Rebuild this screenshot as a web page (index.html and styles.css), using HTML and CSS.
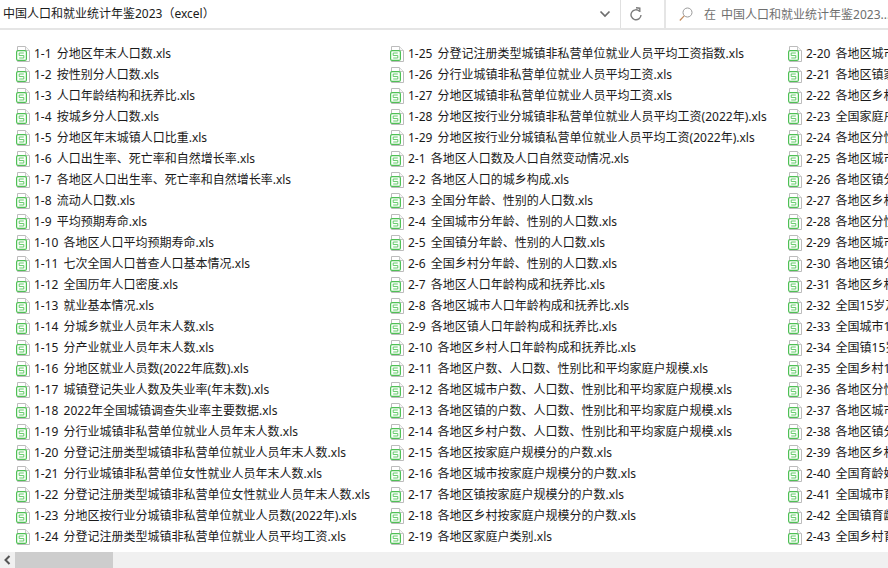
FILE: index.html
```html
<!DOCTYPE html>
<html lang="zh-CN">
<head>
<meta charset="utf-8">
<title>中国人口和就业统计年鉴2023（excel）</title>
<link rel="stylesheet" href="styles.css">
</head>
<body>
<svg class="defs" width="0" height="0" aria-hidden="true">
<symbol id="xls" viewBox="0 0 14 16">
<path d="M1.500 .5H9.500L13.500 4.500V15.500H1.500Z" fill="#fff" stroke="#bcbcbc"/>
<path d="M9.500 .5V4.500H13.500" fill="#f6f6f6" stroke="#c8c8c8"/>
<rect x=".6" y="4.600" width="9.800" height="9.800" rx="1.500" fill="#fafffa" stroke="#4fc055" stroke-width="1.200"/>
<path d="M7.800 7H3.200V9.500H7.800V12H3.200" fill="none" stroke="#5cc662" stroke-width=".9"/>
</symbol>
</svg>
<header class="bar">
<div class="title">中国人口和就业统计年鉴2023（excel）</div>
<div class="tool tool-chevron"><svg width="12" height="8" viewBox="0 0 12 8"><path d="M1.500 1.500L6 6L10.500 1.500" fill="none" stroke="#6d6d6d" stroke-width="1.700"/></svg></div>
<div class="tool"><svg width="12" height="14" viewBox="0 0 12 14"><path d="M9.500 4.200A5 5 0 1 0 11 8" fill="none" stroke="#7b7b7b" stroke-width="1.400"/><path d="M6 .8L9.800 1.200V5" fill="none" stroke="#7b7b7b" stroke-width="1.400"/></svg></div>
<div class="search">
<svg class="search-icon" width="14" height="15" viewBox="0 0 14 15"><circle cx="8.500" cy="5.500" r="4.500" fill="none" stroke="#9a9a9a"/><path d="M5.200 8.800L.8 13.500" stroke="#c28a5c" stroke-width="1.200"/></svg>
<span class="placeholder">在 中国人口和就业统计年鉴2023...</span>
</div>
</header>
<main class="list">
<section class="col col-a">
<div class="row"><svg class="ico"><use href="#xls"/></svg><span>1-1 分地区年末人口数.xls</span></div>
<div class="row"><svg class="ico"><use href="#xls"/></svg><span>1-2 按性别分人口数.xls</span></div>
<div class="row"><svg class="ico"><use href="#xls"/></svg><span>1-3 人口年龄结构和抚养比.xls</span></div>
<div class="row"><svg class="ico"><use href="#xls"/></svg><span>1-4 按城乡分人口数.xls</span></div>
<div class="row"><svg class="ico"><use href="#xls"/></svg><span>1-5 分地区年末城镇人口比重.xls</span></div>
<div class="row"><svg class="ico"><use href="#xls"/></svg><span>1-6 人口出生率、死亡率和自然增长率.xls</span></div>
<div class="row"><svg class="ico"><use href="#xls"/></svg><span>1-7 各地区人口出生率、死亡率和自然增长率.xls</span></div>
<div class="row"><svg class="ico"><use href="#xls"/></svg><span>1-8 流动人口数.xls</span></div>
<div class="row"><svg class="ico"><use href="#xls"/></svg><span>1-9 平均预期寿命.xls</span></div>
<div class="row"><svg class="ico"><use href="#xls"/></svg><span>1-10 各地区人口平均预期寿命.xls</span></div>
<div class="row"><svg class="ico"><use href="#xls"/></svg><span>1-11 七次全国人口普查人口基本情况.xls</span></div>
<div class="row"><svg class="ico"><use href="#xls"/></svg><span>1-12 全国历年人口密度.xls</span></div>
<div class="row"><svg class="ico"><use href="#xls"/></svg><span>1-13 就业基本情况.xls</span></div>
<div class="row"><svg class="ico"><use href="#xls"/></svg><span>1-14 分城乡就业人员年末人数.xls</span></div>
<div class="row"><svg class="ico"><use href="#xls"/></svg><span>1-15 分产业就业人员年末人数.xls</span></div>
<div class="row"><svg class="ico"><use href="#xls"/></svg><span>1-16 分地区就业人员数(2022年底数).xls</span></div>
<div class="row"><svg class="ico"><use href="#xls"/></svg><span>1-17 城镇登记失业人数及失业率(年末数).xls</span></div>
<div class="row"><svg class="ico"><use href="#xls"/></svg><span>1-18 2022年全国城镇调查失业率主要数据.xls</span></div>
<div class="row"><svg class="ico"><use href="#xls"/></svg><span>1-19 分行业城镇非私营单位就业人员年末人数.xls</span></div>
<div class="row"><svg class="ico"><use href="#xls"/></svg><span>1-20 分登记注册类型城镇非私营单位就业人员年末人数.xls</span></div>
<div class="row"><svg class="ico"><use href="#xls"/></svg><span>1-21 分行业城镇非私营单位女性就业人员年末人数.xls</span></div>
<div class="row"><svg class="ico"><use href="#xls"/></svg><span>1-22 分登记注册类型城镇非私营单位女性就业人员年末人数.xls</span></div>
<div class="row"><svg class="ico"><use href="#xls"/></svg><span>1-23 分地区按行业分城镇非私营单位就业人员数(2022年).xls</span></div>
<div class="row"><svg class="ico"><use href="#xls"/></svg><span>1-24 分登记注册类型城镇非私营单位就业人员平均工资.xls</span></div>
</section>
<section class="col col-b">
<div class="row"><svg class="ico"><use href="#xls"/></svg><span>1-25 分登记注册类型城镇非私营单位就业人员平均工资指数.xls</span></div>
<div class="row"><svg class="ico"><use href="#xls"/></svg><span>1-26 分行业城镇非私营单位就业人员平均工资.xls</span></div>
<div class="row"><svg class="ico"><use href="#xls"/></svg><span>1-27 分地区城镇非私营单位就业人员平均工资.xls</span></div>
<div class="row"><svg class="ico"><use href="#xls"/></svg><span>1-28 分地区按行业分城镇非私营单位就业人员平均工资(2022年).xls</span></div>
<div class="row"><svg class="ico"><use href="#xls"/></svg><span>1-29 分地区按行业分城镇私营单位就业人员平均工资(2022年).xls</span></div>
<div class="row"><svg class="ico"><use href="#xls"/></svg><span>2-1 各地区人口数及人口自然变动情况.xls</span></div>
<div class="row"><svg class="ico"><use href="#xls"/></svg><span>2-2 各地区人口的城乡构成.xls</span></div>
<div class="row"><svg class="ico"><use href="#xls"/></svg><span>2-3 全国分年龄、性别的人口数.xls</span></div>
<div class="row"><svg class="ico"><use href="#xls"/></svg><span>2-4 全国城市分年龄、性别的人口数.xls</span></div>
<div class="row"><svg class="ico"><use href="#xls"/></svg><span>2-5 全国镇分年龄、性别的人口数.xls</span></div>
<div class="row"><svg class="ico"><use href="#xls"/></svg><span>2-6 全国乡村分年龄、性别的人口数.xls</span></div>
<div class="row"><svg class="ico"><use href="#xls"/></svg><span>2-7 各地区人口年龄构成和抚养比.xls</span></div>
<div class="row"><svg class="ico"><use href="#xls"/></svg><span>2-8 各地区城市人口年龄构成和抚养比.xls</span></div>
<div class="row"><svg class="ico"><use href="#xls"/></svg><span>2-9 各地区镇人口年龄构成和抚养比.xls</span></div>
<div class="row"><svg class="ico"><use href="#xls"/></svg><span>2-10 各地区乡村人口年龄构成和抚养比.xls</span></div>
<div class="row"><svg class="ico"><use href="#xls"/></svg><span>2-11 各地区户数、人口数、性别比和平均家庭户规模.xls</span></div>
<div class="row"><svg class="ico"><use href="#xls"/></svg><span>2-12 各地区城市户数、人口数、性别比和平均家庭户规模.xls</span></div>
<div class="row"><svg class="ico"><use href="#xls"/></svg><span>2-13 各地区镇的户数、人口数、性别比和平均家庭户规模.xls</span></div>
<div class="row"><svg class="ico"><use href="#xls"/></svg><span>2-14 各地区乡村户数、人口数、性别比和平均家庭户规模.xls</span></div>
<div class="row"><svg class="ico"><use href="#xls"/></svg><span>2-15 各地区按家庭户规模分的户数.xls</span></div>
<div class="row"><svg class="ico"><use href="#xls"/></svg><span>2-16 各地区城市按家庭户规模分的户数.xls</span></div>
<div class="row"><svg class="ico"><use href="#xls"/></svg><span>2-17 各地区镇按家庭户规模分的户数.xls</span></div>
<div class="row"><svg class="ico"><use href="#xls"/></svg><span>2-18 各地区乡村按家庭户规模分的户数.xls</span></div>
<div class="row"><svg class="ico"><use href="#xls"/></svg><span>2-19 各地区家庭户类别.xls</span></div>
</section>
<section class="col col-c">
<div class="row"><svg class="ico"><use href="#xls"/></svg><span>2-20 各地区城市</span></div>
<div class="row"><svg class="ico"><use href="#xls"/></svg><span>2-21 各地区镇家</span></div>
<div class="row"><svg class="ico"><use href="#xls"/></svg><span>2-22 各地区乡村</span></div>
<div class="row"><svg class="ico"><use href="#xls"/></svg><span>2-23 全国家庭户</span></div>
<div class="row"><svg class="ico"><use href="#xls"/></svg><span>2-24 各地区分性</span></div>
<div class="row"><svg class="ico"><use href="#xls"/></svg><span>2-25 各地区城市</span></div>
<div class="row"><svg class="ico"><use href="#xls"/></svg><span>2-26 各地区镇分</span></div>
<div class="row"><svg class="ico"><use href="#xls"/></svg><span>2-27 各地区乡村</span></div>
<div class="row"><svg class="ico"><use href="#xls"/></svg><span>2-28 各地区分性</span></div>
<div class="row"><svg class="ico"><use href="#xls"/></svg><span>2-29 各地区城市</span></div>
<div class="row"><svg class="ico"><use href="#xls"/></svg><span>2-30 各地区镇分</span></div>
<div class="row"><svg class="ico"><use href="#xls"/></svg><span>2-31 各地区乡村</span></div>
<div class="row"><svg class="ico"><use href="#xls"/></svg><span>2-32 全国15岁及</span></div>
<div class="row"><svg class="ico"><use href="#xls"/></svg><span>2-33 全国城市15</span></div>
<div class="row"><svg class="ico"><use href="#xls"/></svg><span>2-34 全国镇15岁</span></div>
<div class="row"><svg class="ico"><use href="#xls"/></svg><span>2-35 全国乡村15</span></div>
<div class="row"><svg class="ico"><use href="#xls"/></svg><span>2-36 各地区分性</span></div>
<div class="row"><svg class="ico"><use href="#xls"/></svg><span>2-37 各地区城市</span></div>
<div class="row"><svg class="ico"><use href="#xls"/></svg><span>2-38 各地区镇分</span></div>
<div class="row"><svg class="ico"><use href="#xls"/></svg><span>2-39 各地区乡村</span></div>
<div class="row"><svg class="ico"><use href="#xls"/></svg><span>2-40 全国育龄妇</span></div>
<div class="row"><svg class="ico"><use href="#xls"/></svg><span>2-41 全国城市育</span></div>
<div class="row"><svg class="ico"><use href="#xls"/></svg><span>2-42 全国镇育龄</span></div>
<div class="row"><svg class="ico"><use href="#xls"/></svg><span>2-43 全国乡村育</span></div>
</section>
</main>
<footer class="scrollbar">
<div class="arrow"><svg width="7" height="10" viewBox="0 0 7 10"><path d="M5.500 1L1.500 5L5.500 9" fill="none" stroke="#555" stroke-width="2"/></svg></div>
<div class="thumb"></div>
</footer>
</body>
</html>
```
FILE: styles.css
```css
* { box-sizing: border-box; }
html, body { height: 100%; }
body {
  margin: 0;
  width: 888px;
  height: 568px;
  overflow: hidden;
  display: flex;
  flex-direction: column;
  background: #fff;
  color: #1a1a1a;
  font: 12px/21px "Noto Sans", "Noto Sans CJK SC", sans-serif;
  word-spacing: 2px;
}
.defs { display: block; height: 0; }
.bar {
  flex: none;
  height: 30px;
  display: flex;
  border-bottom: 2px solid #e5e5e5;
}
.title {
  width: 589px;
  padding-left: 3px;
  line-height: 27px;
  white-space: nowrap;
}
.tool {
  width: 31px;
  display: flex;
  align-items: center;
  justify-content: center;
  border-left: 1px solid #e0e0e0;
}
.tool-chevron { border-left: 0; }
.search {
  flex: 1;
  margin-left: 13px;
  display: flex;
  align-items: center;
  padding-left: 13px;
  gap: 11px;
  border-left: 2px solid #e5e5e5;
  white-space: nowrap;
  overflow: hidden;
}
.search-icon { flex: none; }
.placeholder { color: #6f6f6f; }
.list {
  flex: 1;
  min-height: 0;
  display: flex;
  padding: 13px 0 0 16px;
  overflow: hidden;
}
.col { flex: none; }
.col-a { width: 374px; }
.col-b { width: 398px; }
.col-c { width: 200px; }
.row {
  height: 21px;
  display: flex;
  align-items: center;
  gap: 4px;
  white-space: nowrap;
}
.ico { flex: none; width: 14px; height: 16px; }
.scrollbar {
  flex: none;
  height: 16px;
  display: flex;
  background: #f0f0f0;
}
.arrow {
  width: 15px;
  display: flex;
  align-items: center;
  justify-content: center;
}
.thumb { width: 98px; background: #cdcdcd; }
```
